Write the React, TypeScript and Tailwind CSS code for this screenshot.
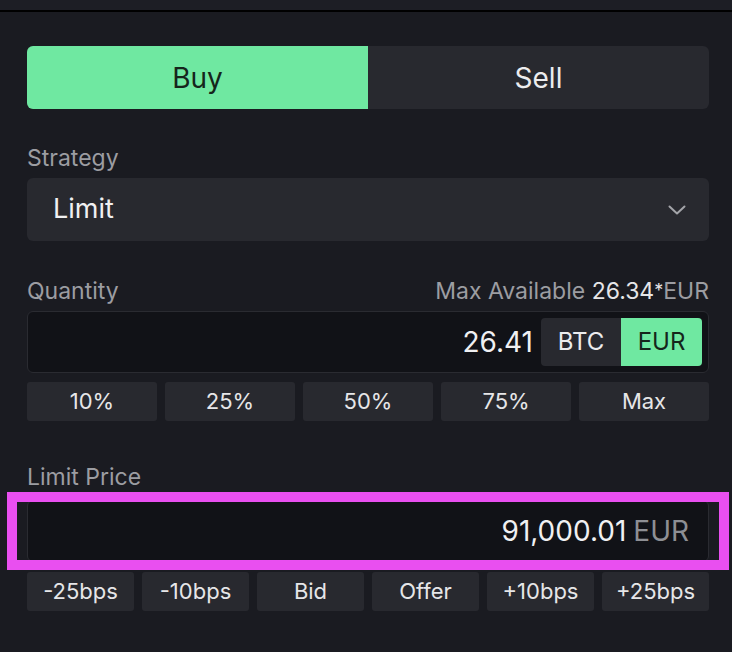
import React from 'react';

const pcts = ['10%', '25%', '50%', '75%', 'Max'];
const steps = ['-25bps', '-10bps', 'Bid', 'Offer', '+10bps', '+25bps'];

export default function App() {
  return (
    <div className="w-[732px] h-[652px] bg-[#1a1b21] overflow-hidden font-['Inter',sans-serif] text-[#e8e8ea]">
      <div className="h-[12px] bg-[#1d1e25] border-b-[2px] border-black" />

      <div className="pl-[27px] pr-[23px] pt-[34px]">
        {/* side toggle */}
        <div className="flex h-[63px] rounded-[6px] overflow-hidden bg-[#28292f]">
          <button className="flex-1 bg-[#6fe8a1] text-[#15251b] text-[28px]">Buy</button>
          <button className="flex-1 text-[#ececee] text-[28px]">Sell</button>
        </div>

        <div className="mt-[35px] h-[28px] leading-[28px] text-[23px] text-[#9c9da2]">Strategy</div>
        <div className="mt-[6px] h-[63px] rounded-[6px] bg-[#28292f] flex items-center justify-between pl-[26px] pr-[23px]">
          <span className="text-[27px] text-[#f0f0f2]">Limit</span>
          <svg width="18" height="10" viewBox="0 0 18 10" fill="none">
            <path d="M1.5 1.5 L9 8.5 L16.5 1.5" stroke="#a3a4a9" strokeWidth="2" strokeLinecap="round" strokeLinejoin="round" />
          </svg>
        </div>

        <div className="mt-[36px] flex items-end justify-between h-[28px] leading-[28px]">
          <span className="text-[23px] text-[#9c9da2]">Quantity</span>
          <span className="text-[23px] text-[#9c9da2]">
            Max Available <span className="text-[#e6e6e8]">26.34</span>
            <span className="text-[#e6e6e8] text-[18px] align-top">*</span>EUR
          </span>
        </div>
        <div className="mt-[6px] h-[62px] rounded-[6px] bg-[#111217] border border-[#2a2b31] flex items-center justify-end pr-[6px]">
          <span className="text-[28px] text-[#f0f0f2] mr-[8px]">26.41</span>
          <div className="flex h-[48px] rounded-[4px] overflow-hidden">
            <span className="w-[80px] bg-[#28292f] flex items-center justify-center text-[24px] text-[#ececee]">BTC</span>
            <span className="w-[81px] bg-[#6fe8a1] flex items-center justify-center text-[24px] text-[#15251b]">EUR</span>
          </div>
        </div>
        <div className="mt-[9px] grid grid-cols-5 gap-[8px]">
          {pcts.map((p) => (
            <div key={p} className="h-[39px] rounded-[3px] bg-[#28292f] flex items-center justify-center text-[22px] text-[#e6e6e8]">
              {p}
            </div>
          ))}
        </div>

        <div className="mt-[42px] h-[28px] leading-[28px] text-[23px] text-[#9c9da2]">Limit Price</div>
        <div className="relative mt-[9px]">
          {/* highlight annotation */}
          <div className="absolute -left-[20px] -right-[20px] -top-[8px] -bottom-[8px] border-[10px] border-[#e94ff0]" />
          <div className="h-[62px] rounded-[6px] bg-[#111217] border border-[#2a2b31] flex items-center justify-end pr-[19px]">
            <span className="text-[28px] text-[#f0f0f2]">91,000.01</span>
            <span className="ml-[7px] text-[28px] text-[#8e8f94]">EUR</span>
          </div>
        </div>
        <div className="mt-[10px] grid grid-cols-6 gap-[8px]">
          {steps.map((s) => (
            <div key={s} className="h-[39px] rounded-[3px] bg-[#28292f] flex items-center justify-center text-[22px] text-[#e6e6e8]">
              {s}
            </div>
          ))}
        </div>
      </div>
    </div>
  );
}
